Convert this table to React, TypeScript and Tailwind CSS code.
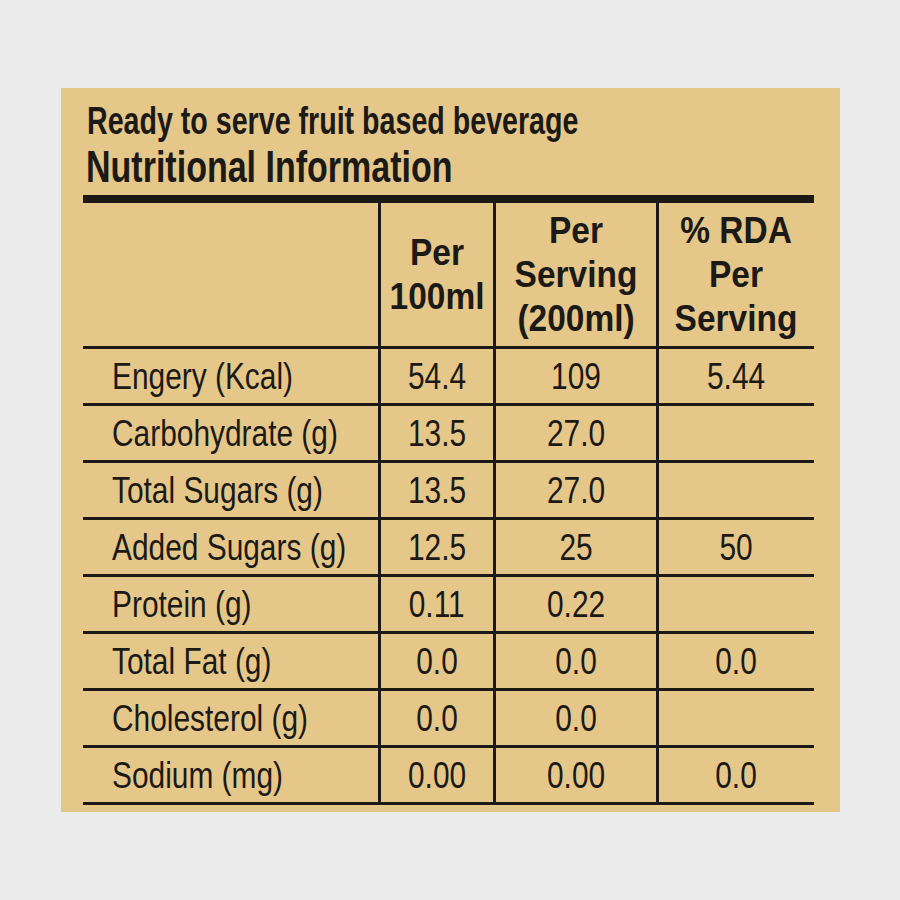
import React from "react";

const rows: [string, string, string, string][] = [
  ["Engery (Kcal)", "54.4", "109", "5.44"],
  ["Carbohydrate (g)", "13.5", "27.0", ""],
  ["Total Sugars (g)", "13.5", "27.0", ""],
  ["Added Sugars (g)", "12.5", "25", "50"],
  ["Protein (g)", "0.11", "0.22", ""],
  ["Total Fat (g)", "0.0", "0.0", "0.0"],
  ["Cholesterol (g)", "0.0", "0.0", ""],
  ["Sodium (mg)", "0.00", "0.00", "0.0"],
];

const font = { fontFamily: "'Liberation Sans', Arial, sans-serif" };

function N({ children }: { children: React.ReactNode }) {
  return <span className="inline-block whitespace-nowrap scale-x-[0.83]">{children}</span>;
}

function H({ children }: { children: React.ReactNode }) {
  return <div><span className="inline-block whitespace-nowrap scale-x-[0.93]">{children}</span></div>;
}

export default function App() {
  return (
    <div className="w-[900px] h-[900px] bg-[#ececec] pt-[88px] pl-[61px]" style={font}>
      <div className="w-[779px] h-[724px] bg-[#e5c78a] pl-[22px] pt-[10px] text-[#1c1a17]">
        <div className="pl-[4px] text-[38px] font-bold leading-[46px] whitespace-nowrap">
          <span className="inline-block origin-left scale-x-[0.753]">Ready to serve fruit based beverage</span>
        </div>
        <div className="pl-[3px] text-[44px] font-bold leading-[46px] whitespace-nowrap">
          <span className="inline-block origin-left scale-x-[0.773]">Nutritional Information</span>
        </div>
        <div className="mt-[5px] w-[731px] h-[8px] bg-[#1c1a17]" />
        <div className="w-[731px]">
          <div className="flex h-[146px] border-b-[3px] border-[#1c1a17] font-bold text-[36px] leading-[44px] text-center">
            <div className="w-[295px]" />
            <div className="w-[115px] border-l-[3px] border-[#1c1a17] flex flex-col justify-center">
              <H>Per</H>
              <H>100ml</H>
            </div>
            <div className="w-[163px] border-l-[3px] border-[#1c1a17] flex flex-col justify-center">
              <H>Per</H>
              <H>Serving</H>
              <H>(200ml)</H>
            </div>
            <div className="w-[158px] border-l-[3px] border-[#1c1a17] flex flex-col justify-center">
              <H>% RDA</H>
              <H>Per</H>
              <H>Serving</H>
            </div>
          </div>
          {rows.map((r) => (
            <div key={r[0]} className="flex h-[57px] border-b-[3px] border-[#1c1a17] text-[36px] leading-[40px]">
              <div className="w-[295px] pl-[29px] pt-[2px] flex items-center whitespace-nowrap">
                <span className="inline-block origin-left scale-x-[0.83]">{r[0]}</span>
              </div>
              <div className="w-[115px] border-l-[3px] border-[#1c1a17] pt-[2px] flex items-center justify-center">
                <N>{r[1]}</N>
              </div>
              <div className="w-[163px] border-l-[3px] border-[#1c1a17] pt-[2px] flex items-center justify-center">
                <N>{r[2]}</N>
              </div>
              <div className="w-[158px] border-l-[3px] border-[#1c1a17] pt-[2px] flex items-center justify-center">
                <N>{r[3]}</N>
              </div>
            </div>
          ))}
        </div>
      </div>
    </div>
  );
}
